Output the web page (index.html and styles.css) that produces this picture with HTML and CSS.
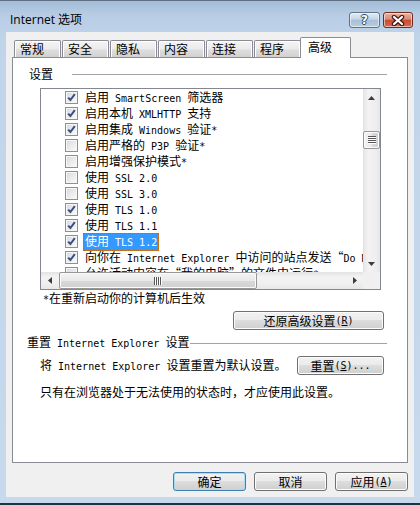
FILE: index.html
```html
<!DOCTYPE html>
<html lang="zh-CN">
<head>
    <meta charset="UTF-8">
    <title>Internet 选项</title>
    <link rel="stylesheet" href="styles.css">
</head>
<body>
    <div class="window">
        <div class="titlebar">
            <span class="title">Internet 选项</span>
            <div class="caption-buttons">
                <div class="cap-btn help"><span>?</span></div>
                <div class="cap-btn close">
                    <svg width="14" height="11" viewBox="0 0 14 11">
                        <path d="M3 2 L11 9 M11 2 L3 9" stroke="#3b1a14" stroke-width="4.4" stroke-linecap="round"/>
                        <path d="M3 2 L11 9 M11 2 L3 9" stroke="#fff" stroke-width="2.2" stroke-linecap="round"/>
                    </svg>
                </div>
            </div>
        </div>

        <div class="client">
            <div class="tabs">
                <div class="tab">常规</div>
                <div class="tab">安全</div>
                <div class="tab">隐私</div>
                <div class="tab">内容</div>
                <div class="tab">连接</div>
                <div class="tab">程序</div>
                <div class="tab active">高级</div>
            </div>

            <div class="page">
                <div class="group-head">
                    <span>设置</span>
                    <span class="rule settings-rule"></span>
                </div>

                <div class="listbox">
                    <div class="list-main">
                        <div class="items">
                            <div class="row"><span class="cb on"></span><span class="lbl">启用<span class="en"> SmartScreen </span>筛选器</span></div>
                            <div class="row"><span class="cb on"></span><span class="lbl">启用本机<span class="en"> XMLHTTP </span>支持</span></div>
                            <div class="row"><span class="cb on"></span><span class="lbl">启用集成<span class="en"> Windows </span>验证<span class="en">*</span></span></div>
                            <div class="row"><span class="cb"></span><span class="lbl">启用严格的<span class="en"> P3P </span>验证<span class="en">*</span></span></div>
                            <div class="row"><span class="cb"></span><span class="lbl">启用增强保护模式<span class="en">*</span></span></div>
                            <div class="row"><span class="cb"></span><span class="lbl">使用<span class="en"> SSL 2.0</span></span></div>
                            <div class="row"><span class="cb"></span><span class="lbl">使用<span class="en"> SSL 3.0</span></span></div>
                            <div class="row"><span class="cb on"></span><span class="lbl">使用<span class="en"> TLS 1.0</span></span></div>
                            <div class="row"><span class="cb on"></span><span class="lbl">使用<span class="en"> TLS 1.1</span></span></div>
                            <div class="row sel"><span class="cb on"></span><span class="lbl">使用<span class="en"> TLS 1.2</span></span></div>
                            <div class="row"><span class="cb on"></span><span class="lbl">向你在<span class="en"> Internet Explorer </span>中访问的站点发送“<span class="en">Do Not Track</span>”请求</span></div>
                            <div class="row"><span class="cb"></span><span class="lbl">允许活动内容在“我的电脑”的文件中运行<span class="en">*</span></span></div>
                        </div>
                        <div class="vscroll">
                            <div class="sb-btn">
                                <svg width="7" height="4" viewBox="0 0 7 4"><polygon points="3.5,0 7,4 0,4" fill="#3d3d3d"/></svg>
                            </div>
                            <div class="v-gap-top"></div>
                            <div class="thumb vthumb">
                                <svg width="8" height="8" viewBox="0 0 8 8">
                                    <path d="M0 0.5h8M0 2.5h8M0 4.5h8M0 6.5h8" stroke="#555" stroke-width="1"/>
                                    <path d="M0 1.5h8M0 3.5h8M0 5.5h8M0 7.5h8" stroke="#fff" stroke-width="1"/>
                                </svg>
                            </div>
                            <div class="v-gap-bottom"></div>
                            <div class="sb-btn">
                                <svg width="7" height="4" viewBox="0 0 7 4"><polygon points="0,0 7,0 3.5,4" fill="#3d3d3d"/></svg>
                            </div>
                        </div>
                    </div>
                    <div class="list-bottom">
                        <div class="hscroll">
                            <div class="sb-btn">
                                <svg width="4" height="7" viewBox="0 0 4 7"><polygon points="0,3.5 4,0 4,7" fill="#3d3d3d"/></svg>
                            </div>
                            <div class="thumb hthumb">
                                <svg width="8" height="8" viewBox="0 0 8 8">
                                    <path d="M0.5 0v8M2.5 0v8M4.5 0v8M6.5 0v8" stroke="#555" stroke-width="1"/>
                                    <path d="M1.5 0v8M3.5 0v8M5.5 0v8M7.5 0v8" stroke="#fff" stroke-width="1"/>
                                </svg>
                            </div>
                            <div class="h-gap"></div>
                            <div class="sb-btn">
                                <svg width="4" height="7" viewBox="0 0 4 7"><polygon points="0,0 4,3.5 0,7" fill="#3d3d3d"/></svg>
                            </div>
                        </div>
                        <div class="corner"></div>
                    </div>
                </div>

                <p class="note"><span class="en">*</span>在重新启动你的计算机后生效</p>

                <div class="btn-row">
                    <div class="btn restore-btn">还原高级设置<span class="en">(<u>R</u>)</span></div>
                </div>

                <div class="group-head reset-head">
                    <span>重置<span class="en"> Internet Explorer </span>设置</span>
                    <span class="rule"></span>
                </div>

                <div class="reset-row">
                    <span>将<span class="en"> Internet Explorer </span>设置重置为默认设置。</span>
                    <div class="btn reset-btn">重置<span class="en">(<u>S</u>)...</span></div>
                </div>

                <p class="hint">只有在浏览器处于无法使用的状态时，才应使用此设置。</p>
            </div>

            <div class="footer">
                <div class="btn default">确定</div>
                <div class="btn">取消</div>
                <div class="btn">应用<span class="en">(<u>A</u>)</span></div>
            </div>
        </div>
    </div>
</body>
</html>
```

FILE: styles.css
```css
* {
    margin: 0;
    padding: 0;
    box-sizing: border-box;
}

body {
    width: 420px;
    height: 505px;
    overflow: hidden;
    font-family: "Noto Sans CJK SC", sans-serif;
    font-size: 12px;
    color: #000;
    background: #c2d6eb;
}

.window {
    height: 505px;
    display: flex;
    flex-direction: column;
    background: linear-gradient(180deg, #a3bcd7 0, #b7cde5 14px, #c1d5ea 40px, #c6d9ed 100%);
    border-top: 1px solid #5d7084;
    border-bottom: 2px solid #1f3442;
}

/* title bar */
.titlebar {
    height: 31px;
    flex: none;
    display: flex;
    align-items: flex-start;
    padding: 0 7px 0 10px;
}

.title {
    font-family: "Open Sans", "Noto Sans CJK SC", sans-serif;
    font-size: 12px;
    line-height: 16px;
    margin-top: 11px;
}

.caption-buttons {
    margin-left: auto;
    margin-top: 11px;
    display: flex;
    gap: 3px;
}

.cap-btn {
    height: 16px;
    border-radius: 3px;
    border: 1px solid #5f7288;
    display: flex;
    align-items: center;
    justify-content: center;
    box-shadow: inset 0 0 0 1px rgba(255, 255, 255, 0.55);
}

.help {
    width: 31px;
    background: linear-gradient(180deg, #e2ebf5 0, #c5d5e6 45%, #a9bfd6 50%, #b9cde2 100%);
}

.help span {
    font-family: "DejaVu Sans", sans-serif;
    font-weight: bold;
    font-size: 12px;
    line-height: 12px;
    color: #fff;
    text-shadow: 1px 0 0 #34465a, -1px 0 0 #34465a, 0 1px 0 #34465a, 0 -1px 0 #34465a;
}

.close {
    width: 30px;
    border-color: #6f2b20;
    background: linear-gradient(180deg, #eab0a1 0, #dc8a74 45%, #c84a32 50%, #d46a4c 100%);
}

/* client area */
.client {
    margin: 0 6px;
    height: 465px;
    flex: none;
    background: #f0f0f0;
    padding: 5px 6px 0;
}

.tabs {
    height: 20px;
    display: flex;
    align-items: flex-end;
    padding-left: 2px;
}

.tab {
    width: 47px;
    height: 17px;
    margin-right: 1px;
    padding-left: 5px;
    line-height: 16px;
    border: 1px solid #898c95;
    border-bottom: none;
    border-radius: 2px 2px 0 0;
    background: linear-gradient(180deg, #f4f4f4 0, #ebebeb 50%, #dedede 55%, #d1d1d1 100%);
    box-shadow: inset 1px 1px 0 #fff, inset -1px 0 0 #fff;
}

.tab.active {
    width: 51px;
    height: 21px;
    margin-left: -2px;
    margin-right: 0;
    margin-bottom: -1px;
    padding-left: 7px;
    line-height: 18px;
    background: #fff;
    box-shadow: none;
    position: relative;
    z-index: 1;
}

.page {
    height: 406px;
    border: 1px solid #898c95;
    background: #fff;
}

/* group headers */
.group-head {
    height: 16px;
    margin-top: 8px;
    padding: 0 20px 0 16px;
    display: flex;
    align-items: center;
    white-space: nowrap;
    line-height: 16px;
}

.rule {
    flex: 1;
    height: 1px;
    margin-left: 1px;
    background: #a3a3a3;
}

.settings-rule {
    margin-left: 19px;
}

.reset-head {
    margin-top: 5px;
    padding-left: 14px;
}

.en {
    font-family: "DejaVu Sans Mono", monospace;
    font-size: 10px;
}

/* list box */
.listbox {
    margin: 6px 0 0 27px;
    width: 341px;
    height: 202px;
    border: 1px solid #828790;
    display: flex;
    flex-direction: column;
}

.list-main {
    height: 183px;
    display: flex;
}

.items {
    flex: 1;
    overflow: hidden;
}

.row {
    height: 16px;
    display: flex;
    align-items: flex-start;
    padding-left: 24px;
    white-space: nowrap;
}

.cb {
    flex: none;
    width: 13px;
    height: 13px;
    margin-top: 2px;
    border: 1px solid #8e8f8f;
    background: linear-gradient(135deg, #d4d6d9 0, #eeeeee 60%, #fbfbfb 100%);
    box-shadow: inset 0 0 0 1px #f6f6f6;
}

.cb.on {
    background:
        url("data:image/svg+xml,%3Csvg xmlns='http://www.w3.org/2000/svg' width='11' height='11'%3E%3Cpath d='M2.2 5.6 L4.4 8 L8.8 2.2' fill='none' stroke='%23334f85' stroke-width='2'/%3E%3C/svg%3E") center / 11px 11px no-repeat,
        linear-gradient(135deg, #d4d6d9 0, #eeeeee 60%, #fbfbfb 100%);
}

.lbl {
    margin-left: 5px;
    padding: 0 1px;
    border: 1px solid transparent;
    line-height: 14px;
}

.row.sel .lbl {
    background: #3399ff;
    color: #fff;
    border: 1px dotted #c4660a;
}

/* scroll bars */
.vscroll {
    width: 17px;
    flex: none;
    display: flex;
    flex-direction: column;
    background: linear-gradient(90deg, #e3e3e3 0, #f3f3f3 30%, #efefef 70%, #e7e7e7 100%);
}

.sb-btn {
    flex: none;
    height: 17px;
    width: 17px;
    display: flex;
    align-items: center;
    justify-content: center;
}

.sb-btn svg {
    display: block;
}

.v-gap-top {
    height: 25px;
    flex: none;
}

.v-gap-bottom,
.h-gap {
    flex: 1;
}

.thumb {
    flex: none;
    border: 1px solid #979797;
    border-radius: 2px;
    box-shadow: inset 0 0 0 1px #fbfbfb;
    display: flex;
    align-items: center;
    justify-content: center;
}

.vthumb {
    height: 18px;
    background: linear-gradient(90deg, #f3f3f3 0, #e9e9e9 50%, #d9d9d9 51%, #d0d0d0 100%);
}

.list-bottom {
    height: 17px;
    display: flex;
}

.hscroll {
    flex: 1;
    display: flex;
    background: linear-gradient(180deg, #e3e3e3 0, #f3f3f3 30%, #efefef 70%, #e7e7e7 100%);
}

.hthumb {
    width: 198px;
    margin-left: 1px;
    background: linear-gradient(180deg, #f3f3f3 0, #e9e9e9 50%, #d9d9d9 51%, #d0d0d0 100%);
}

.corner {
    width: 17px;
    background: #f0f0f0;
}

/* texts and buttons inside page */
.note {
    margin-left: 30px;
    line-height: 16px;
    white-space: nowrap;
}

.btn-row {
    margin-top: 3px;
    padding-right: 23px;
    display: flex;
    justify-content: flex-end;
}

.btn {
    height: 19px;
    width: 73px;
    border: 1px solid #707070;
    border-radius: 3px;
    background: linear-gradient(180deg, #f2f2f2 0, #ebebeb 45%, #dddddd 50%, #cfcfcf 100%);
    box-shadow: inset 0 0 0 1px #fcfcfc;
    display: flex;
    align-items: center;
    justify-content: center;
    line-height: 16px;
    white-space: nowrap;
}

.restore-btn {
    width: 151px;
}

.reset-row {
    margin-top: 5px;
    padding: 0 23px 0 27px;
    display: flex;
    align-items: center;
    white-space: nowrap;
    line-height: 16px;
}

.reset-btn {
    width: 87px;
    margin-left: auto;
}

.hint {
    margin-top: 9px;
    padding-left: 27px;
    line-height: 16px;
    white-space: nowrap;
}

/* dialog buttons */
.footer {
    margin-top: 9px;
    display: flex;
    justify-content: flex-end;
    gap: 8px;
}

.btn.default {
    border-color: #3c7fb1;
    box-shadow: inset 0 0 0 1px #a8dcf7;
}
```
